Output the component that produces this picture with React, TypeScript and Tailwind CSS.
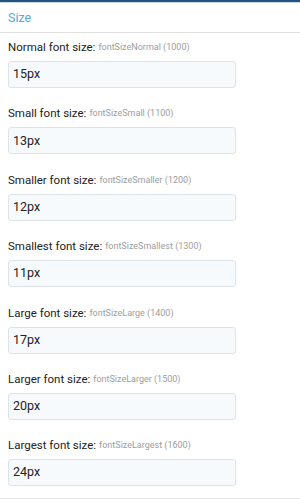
const rows = [
  { label: 'Normal font size:', key: 'fontSizeNormal', id: 1000, value: '15px' },
  { label: 'Small font size:', key: 'fontSizeSmall', id: 1100, value: '13px' },
  { label: 'Smaller font size:', key: 'fontSizeSmaller', id: 1200, value: '12px' },
  { label: 'Smallest font size:', key: 'fontSizeSmallest', id: 1300, value: '11px' },
  { label: 'Large font size:', key: 'fontSizeLarge', id: 1400, value: '17px' },
  { label: 'Larger font size:', key: 'fontSizeLarger', id: 1500, value: '20px' },
  { label: 'Largest font size:', key: 'fontSizeLargest', id: 1600, value: '24px' },
];

export default function App() {
  return (
    <div className="h-[503px] w-[300px] overflow-hidden bg-white font-['Roboto',sans-serif]">
      <div className="h-[2px] bg-[#24527f]" />
      <div className="h-px bg-[#c9d8e6]" />
      <div className="flex h-[29.5px] items-center border-b border-[#e2e2e2] px-2 pt-[2px] text-[12.5px] text-[#5aa6d6]">
        Size
      </div>
      <div className="flex flex-col gap-[17.4px] border-b border-[#e6e6e6] px-2 pb-[11.5px] pt-[6.5px]">
        {rows.map((r) => (
          <div key={r.key} className="flex flex-col">
            <div className="flex h-4 items-center gap-[3px] whitespace-nowrap leading-4">
              <span className="text-[11.5px] text-[#222]">{r.label}</span>
              <span className="text-[9px] text-[#9d9d9d]">
                {r.key} ({r.id})
              </span>
            </div>
            <div className="mt-[6px] flex h-[27px] w-[228px] items-center rounded-[3px] border border-[#dde3e8] bg-[#f6fafd] px-[4px] text-[12.5px] text-[#222]">
              {r.value}
            </div>
          </div>
        ))}
      </div>
    </div>
  );
}
